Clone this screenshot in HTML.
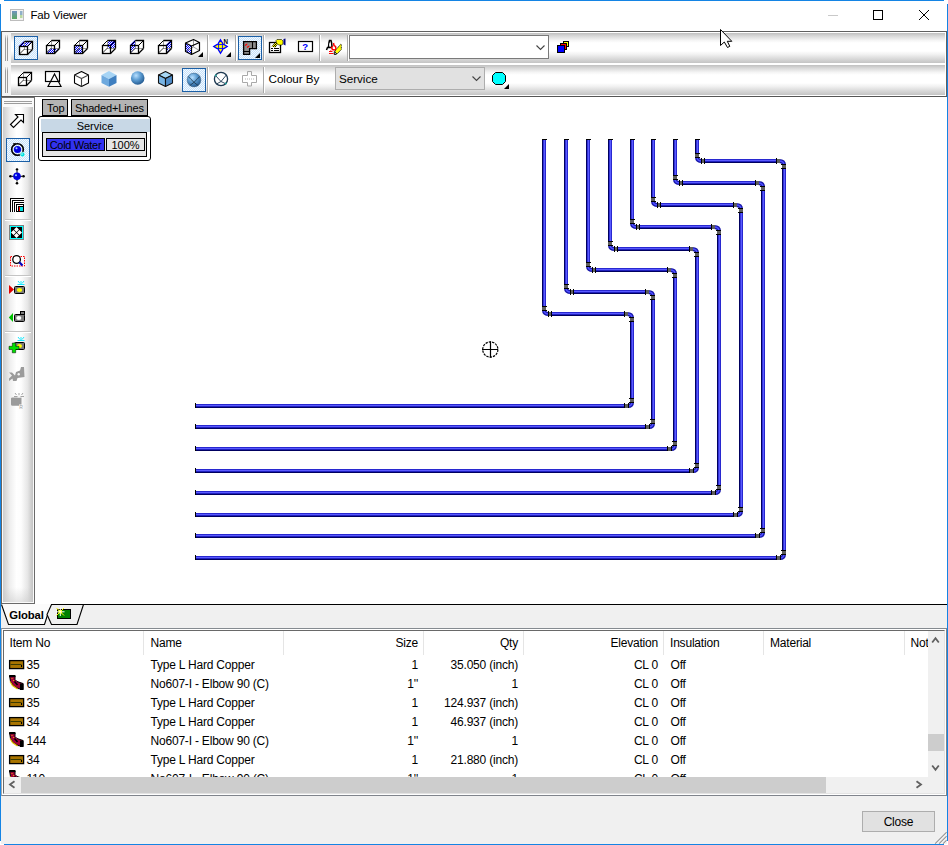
<!DOCTYPE html>
<html><head><meta charset="utf-8">
<style>
*{box-sizing:border-box;margin:0;padding:0}
html,body{width:948px;height:845px;overflow:hidden;background:#fff}
body{position:relative;font-family:"Liberation Sans",sans-serif;font-size:12px;color:#000}
.a{position:absolute}
.sel{position:absolute;border:1px solid #1b5fa6;background-color:#e3f1ff;
 background-image:repeating-conic-gradient(#c4e0fa 0 25%,#f4faff 0 50%);background-size:2px 2px}
.txt{position:absolute;white-space:nowrap;line-height:1}
#ov{position:absolute;left:0;top:0}
</style></head><body>
<div class="a" style="left:4px;top:0;width:940px;height:1px;background:#1484e4"></div><div class="a" style="left:0;top:4px;width:1px;height:837px;background:#1484e4"></div><div class="a" style="left:947px;top:4px;width:1px;height:837px;background:#1484e4"></div><div class="a" style="left:4px;top:844px;width:940px;height:1px;background:#1484e4"></div><div class="txt" style="left:30.5px;top:10.27px;font-size:11.5px;letter-spacing:-0.15px">Fab Viewer</div><div class="a" style="left:1px;top:31px;width:946px;height:1px;background:#606060"></div><div class="a" style="left:1px;top:31px;width:1px;height:66px;background:#606060"></div><div class="a" style="left:946px;top:31px;width:1px;height:66px;background:#606060"></div><div class="a" style="left:2px;top:32px;width:944px;height:64px;background:#f5f5f5"></div><div class="a" style="left:11px;top:32px;width:935px;height:32px;border-top:1px solid #fff;border-bottom:1px solid #fff;border-right:1px solid #fff;background:linear-gradient(#c0c0c0 0%,#d8d8d8 10%,#f4f4f4 24%,#fff 33%,#fff 60%,#f0f0f0 72%,#d6d6d6 88%,#c4c4c4 100%)"></div><div class="a" style="left:5px;top:35px;width:1px;height:26px;background:linear-gradient(#e0e0e0,#9c9c9c 15%,#9c9c9c)"></div><div class="a" style="left:7px;top:35px;width:1px;height:26px;background:linear-gradient(#e0e0e0,#9c9c9c 15%,#9c9c9c)"></div><div class="a" style="left:11px;top:64px;width:935px;height:32px;border-top:1px solid #fff;border-bottom:1px solid #fff;border-right:1px solid #fff;background:linear-gradient(#c0c0c0 0%,#d8d8d8 10%,#f4f4f4 24%,#fff 33%,#fff 60%,#f0f0f0 72%,#d6d6d6 88%,#c4c4c4 100%)"></div><div class="a" style="left:5px;top:67px;width:1px;height:26px;background:linear-gradient(#e0e0e0,#9c9c9c 15%,#9c9c9c)"></div><div class="a" style="left:7px;top:67px;width:1px;height:26px;background:linear-gradient(#e0e0e0,#9c9c9c 15%,#9c9c9c)"></div><div class="a" style="left:1px;top:96px;width:946px;height:1px;background:#555"></div><div class="a" style="left:207px;top:35px;width:1px;height:26px;background:#a8a8a8"></div><div class="a" style="left:208px;top:35px;width:1px;height:26px;background:#fff"></div><div class="a" style="left:235px;top:35px;width:1px;height:26px;background:#a8a8a8"></div><div class="a" style="left:236px;top:35px;width:1px;height:26px;background:#fff"></div><div class="a" style="left:263px;top:35px;width:1px;height:26px;background:#a8a8a8"></div><div class="a" style="left:264px;top:35px;width:1px;height:26px;background:#fff"></div><div class="a" style="left:319px;top:35px;width:1px;height:26px;background:#a8a8a8"></div><div class="a" style="left:320px;top:35px;width:1px;height:26px;background:#fff"></div><div class="a" style="left:347px;top:35px;width:1px;height:26px;background:#a8a8a8"></div><div class="a" style="left:348px;top:35px;width:1px;height:26px;background:#fff"></div><div class="a" style="left:207px;top:67px;width:1px;height:26px;background:#a8a8a8"></div><div class="a" style="left:208px;top:67px;width:1px;height:26px;background:#fff"></div><div class="a" style="left:263px;top:67px;width:1px;height:26px;background:#a8a8a8"></div><div class="a" style="left:264px;top:67px;width:1px;height:26px;background:#fff"></div><div class="sel" style="left:14px;top:36px;width:24px;height:24px"></div><div class="sel" style="left:238px;top:36px;width:24px;height:24px"></div><div class="sel" style="left:182px;top:68px;width:24px;height:24px"></div><div class="a" style="left:349px;top:35px;width:200px;height:24px;background:#fff;border:1px solid #7a7a7a"></div><div class="txt" style="left:268.5px;top:73.10px;font-size:11.7px;letter-spacing:-0.05px">Colour By</div><div class="a" style="left:335px;top:67px;width:150px;height:23px;background:#e1e1e1;border:1px solid #adadad"></div><div class="txt" style="left:339px;top:73.10px;font-size:11.7px;letter-spacing:-0.05px">Service</div><div class="a" style="left:2px;top:97px;width:33px;height:507px;background:#fafafa;border-right:1px solid #6a6a6a;border-bottom:1px solid #6a6a6a"></div><div class="a" style="left:1px;top:97px;width:1px;height:507px;background:#6a6560"></div><div class="a" style="left:1px;top:97px;width:34px;height:1px;background:#707070"></div><div class="a" style="left:3px;top:107px;width:30px;height:495px;background:linear-gradient(#fff0 97%,#c8c8c880 100%),linear-gradient(90deg,#cdcdcd 0%,#f0f0f0 25%,#fff 45%,#fdfdfd 60%,#e6e6e6 82%,#c3c3c3 100%)"></div><div class="a" style="left:4px;top:101px;width:28px;height:1px;background:#9c9c9c"></div><div class="a" style="left:4px;top:103px;width:28px;height:1px;background:#9c9c9c"></div><div class="sel" style="left:6px;top:138px;width:24px;height:24px"></div><div class="a" style="left:5px;top:219px;width:26px;height:1px;background:#c4c4c4"></div><div class="a" style="left:5px;top:220px;width:26px;height:1px;background:#fff"></div><div class="a" style="left:5px;top:275px;width:26px;height:1px;background:#c4c4c4"></div><div class="a" style="left:5px;top:276px;width:26px;height:1px;background:#fff"></div><div class="a" style="left:5px;top:331px;width:26px;height:1px;background:#c4c4c4"></div><div class="a" style="left:5px;top:332px;width:26px;height:1px;background:#fff"></div><div class="a" style="left:42px;top:99px;width:26px;height:17px;background:#b4b4b4;border:1px solid #000"></div><div class="txt" style="left:47px;top:103px;font-size:11px">Top</div><div class="a" style="left:71px;top:99px;width:77px;height:17px;background:#b4b4b4;border:1px solid #000"></div><div class="txt" style="left:75px;top:103px;font-size:11px;letter-spacing:-0.15px">Shaded+Lines</div><div class="a" style="left:38px;top:116px;width:113px;height:45px;background:#fff;border:1px solid #000;border-radius:3px"></div><div class="a" style="left:41px;top:119px;width:109px;height:13px;background:#c8d8e6"></div><div class="txt" style="left:40px;top:121px;width:110px;text-align:center;font-size:11px">Service</div><div class="a" style="left:42px;top:132px;width:105px;height:25px;background:#e6e6e6;border:1px solid #000"></div><div class="a" style="left:46px;top:138px;width:59px;height:13px;background:#3232f0;border:1px solid #000"></div><div class="txt" style="left:46px;top:140px;width:59px;text-align:center;font-size:11px;letter-spacing:-0.3px">Cold Water</div><div class="a" style="left:106px;top:138px;width:39px;height:13px;background:#e6e6e6;border:1px solid #000"></div><div class="txt" style="left:106px;top:140px;width:39px;text-align:center;font-size:11px">100%</div><div class="a" style="left:1px;top:604px;width:946px;height:240px;background:#f0f0f0"></div><div class="a" style="left:1px;top:628px;width:946px;height:168px;background:#fff;border-top:1px solid #858a90;border-left:1px solid #a8a8a8;border-right:1px solid #80848a;border-bottom:1px solid #80848c"></div><div class="a" style="left:3px;top:630px;width:942px;height:164px;background:#fff;border-top:1px solid #696969;border-left:1px solid #696969;border-right:1px solid #e3e3e3;border-bottom:1px solid #e3e3e3"></div><div class="a" style="left:143px;top:631px;width:1px;height:24px;background:#e5e5e5"></div><div class="a" style="left:283px;top:631px;width:1px;height:24px;background:#e5e5e5"></div><div class="a" style="left:423px;top:631px;width:1px;height:24px;background:#e5e5e5"></div><div class="a" style="left:523px;top:631px;width:1px;height:24px;background:#e5e5e5"></div><div class="a" style="left:663px;top:631px;width:1px;height:24px;background:#e5e5e5"></div><div class="a" style="left:763px;top:631px;width:1px;height:24px;background:#e5e5e5"></div><div class="a" style="left:904px;top:631px;width:1px;height:24px;background:#e5e5e5"></div><div class="txt" style="left:9.5px;top:636.84px;font-size:12px;letter-spacing:-0.2px">Item No</div><div class="txt" style="left:150.5px;top:636.84px;font-size:12px;letter-spacing:-0.2px">Name</div><div class="txt" style="left:218px;width:200px;text-align:right;top:636.84px;font-size:12px;letter-spacing:-0.2px">Size</div><div class="txt" style="left:318px;width:200px;text-align:right;top:636.84px;font-size:12px;letter-spacing:-0.2px">Qty</div><div class="txt" style="left:458px;width:200px;text-align:right;top:636.84px;font-size:12px;letter-spacing:-0.2px">Elevation</div><div class="txt" style="left:670px;top:636.84px;font-size:12px;letter-spacing:-0.2px">Insulation</div><div class="txt" style="left:770px;top:636.84px;font-size:12px;letter-spacing:-0.2px">Material</div><div class="txt" style="left:910.5px;top:636.84px;font-size:12px;letter-spacing:-0.2px">Not</div><div class="a" style="left:4px;top:656px;width:924px;height:121px;overflow:hidden"><div class="txt" style="left:22.5px;top:2.84px;font-size:12px;letter-spacing:-0.2px">35</div><div class="txt" style="left:146.5px;top:2.84px;font-size:12px;letter-spacing:-0.2px">Type L Hard Copper</div><div class="txt" style="left:214px;width:200px;text-align:right;top:2.84px;font-size:12px;letter-spacing:-0.2px">1</div><div class="txt" style="left:314px;width:200px;text-align:right;top:2.84px;font-size:12px;letter-spacing:-0.2px">35.050 (inch)</div><div class="txt" style="left:454px;width:200px;text-align:right;top:2.84px;font-size:12px;letter-spacing:-0.2px">CL 0</div><div class="txt" style="left:666.5px;top:2.84px;font-size:12px;letter-spacing:-0.2px">Off</div><div class="txt" style="left:22.5px;top:21.84px;font-size:12px;letter-spacing:-0.2px">60</div><div class="txt" style="left:146.5px;top:21.84px;font-size:12px;letter-spacing:-0.2px">No607-I - Elbow 90 (C)</div><div class="txt" style="left:214px;width:200px;text-align:right;top:21.84px;font-size:12px;letter-spacing:-0.2px">1&#39;&#39;</div><div class="txt" style="left:314px;width:200px;text-align:right;top:21.84px;font-size:12px;letter-spacing:-0.2px">1</div><div class="txt" style="left:454px;width:200px;text-align:right;top:21.84px;font-size:12px;letter-spacing:-0.2px">CL 0</div><div class="txt" style="left:666.5px;top:21.84px;font-size:12px;letter-spacing:-0.2px">Off</div><div class="txt" style="left:22.5px;top:40.84px;font-size:12px;letter-spacing:-0.2px">35</div><div class="txt" style="left:146.5px;top:40.84px;font-size:12px;letter-spacing:-0.2px">Type L Hard Copper</div><div class="txt" style="left:214px;width:200px;text-align:right;top:40.84px;font-size:12px;letter-spacing:-0.2px">1</div><div class="txt" style="left:314px;width:200px;text-align:right;top:40.84px;font-size:12px;letter-spacing:-0.2px">124.937 (inch)</div><div class="txt" style="left:454px;width:200px;text-align:right;top:40.84px;font-size:12px;letter-spacing:-0.2px">CL 0</div><div class="txt" style="left:666.5px;top:40.84px;font-size:12px;letter-spacing:-0.2px">Off</div><div class="txt" style="left:22.5px;top:59.84px;font-size:12px;letter-spacing:-0.2px">34</div><div class="txt" style="left:146.5px;top:59.84px;font-size:12px;letter-spacing:-0.2px">Type L Hard Copper</div><div class="txt" style="left:214px;width:200px;text-align:right;top:59.84px;font-size:12px;letter-spacing:-0.2px">1</div><div class="txt" style="left:314px;width:200px;text-align:right;top:59.84px;font-size:12px;letter-spacing:-0.2px">46.937 (inch)</div><div class="txt" style="left:454px;width:200px;text-align:right;top:59.84px;font-size:12px;letter-spacing:-0.2px">CL 0</div><div class="txt" style="left:666.5px;top:59.84px;font-size:12px;letter-spacing:-0.2px">Off</div><div class="txt" style="left:22.5px;top:78.84px;font-size:12px;letter-spacing:-0.2px">144</div><div class="txt" style="left:146.5px;top:78.84px;font-size:12px;letter-spacing:-0.2px">No607-I - Elbow 90 (C)</div><div class="txt" style="left:214px;width:200px;text-align:right;top:78.84px;font-size:12px;letter-spacing:-0.2px">1&#39;&#39;</div><div class="txt" style="left:314px;width:200px;text-align:right;top:78.84px;font-size:12px;letter-spacing:-0.2px">1</div><div class="txt" style="left:454px;width:200px;text-align:right;top:78.84px;font-size:12px;letter-spacing:-0.2px">CL 0</div><div class="txt" style="left:666.5px;top:78.84px;font-size:12px;letter-spacing:-0.2px">Off</div><div class="txt" style="left:22.5px;top:97.84px;font-size:12px;letter-spacing:-0.2px">34</div><div class="txt" style="left:146.5px;top:97.84px;font-size:12px;letter-spacing:-0.2px">Type L Hard Copper</div><div class="txt" style="left:214px;width:200px;text-align:right;top:97.84px;font-size:12px;letter-spacing:-0.2px">1</div><div class="txt" style="left:314px;width:200px;text-align:right;top:97.84px;font-size:12px;letter-spacing:-0.2px">21.880 (inch)</div><div class="txt" style="left:454px;width:200px;text-align:right;top:97.84px;font-size:12px;letter-spacing:-0.2px">CL 0</div><div class="txt" style="left:666.5px;top:97.84px;font-size:12px;letter-spacing:-0.2px">Off</div><div class="txt" style="left:22.5px;top:116.84px;font-size:12px;letter-spacing:-0.2px">110</div><div class="txt" style="left:146.5px;top:116.84px;font-size:12px;letter-spacing:-0.2px">No607-I - Elbow 90 (C)</div><div class="txt" style="left:214px;width:200px;text-align:right;top:116.84px;font-size:12px;letter-spacing:-0.2px">1&#39;&#39;</div><div class="txt" style="left:314px;width:200px;text-align:right;top:116.84px;font-size:12px;letter-spacing:-0.2px">1</div><div class="txt" style="left:454px;width:200px;text-align:right;top:116.84px;font-size:12px;letter-spacing:-0.2px">CL 0</div><div class="txt" style="left:666.5px;top:116.84px;font-size:12px;letter-spacing:-0.2px">Off</div></div><div class="a" style="left:928px;top:631px;width:16px;height:146px;background:#f0f0f0"></div><div class="a" style="left:928px;top:734px;width:16px;height:17px;background:#cdcdcd"></div><div class="a" style="left:4px;top:777px;width:940px;height:16px;background:#f0f0f0"></div><div class="a" style="left:21px;top:777px;width:805px;height:16px;background:#cdcdcd"></div><div class="a" style="left:862px;top:811px;width:73px;height:21px;background:#e1e1e1;border:1px solid #adadad"></div><div class="txt" style="left:862px;top:815.84px;font-size:12px;width:73px;text-align:center;letter-spacing:-0.2px">Close</div>
<svg id="ov" width="948" height="845" viewBox="0 0 948 845"><defs>
<pattern id="dith" width="2" height="2" patternUnits="userSpaceOnUse">
<rect width="2" height="2" fill="#fff"/><rect width="1" height="1" fill="#0000ff"/><rect x="1" y="1" width="1" height="1" fill="#0000ff"/>
</pattern>
<pattern id="ydith" width="2" height="2" patternUnits="userSpaceOnUse">
<rect width="2" height="2" fill="#000"/><rect width="1" height="1" fill="#ffff00"/><rect x="1" y="1" width="1" height="1" fill="#ffff00"/>
</pattern>
<radialGradient id="sph" cx="0.38" cy="0.32" r="0.7">
<stop offset="0" stop-color="#b8e0ff"/><stop offset="0.5" stop-color="#5a9ad0"/><stop offset="1" stop-color="#245a90"/>
</radialGradient>
<clipPath id="rowclip"><rect x="4" y="656" width="924" height="121"/></clipPath>
<linearGradient id="tgrad" x1="0" y1="0" x2="0" y2="1"><stop offset="0" stop-color="#6f93c0"/><stop offset="1" stop-color="#5aa860"/></linearGradient>
</defs><g>
<rect x="10.5" y="9.5" width="13" height="11" fill="#f2f2f2" stroke="#bdbdbd"/>
<rect x="12" y="11" width="5" height="8" fill="url(#tgrad)"/>
<rect x="20" y="11" width="2.5" height="4" fill="#8fb0c8"/>
<rect x="20" y="15" width="2.5" height="3" fill="#b8d8a0"/>
</g><line x1="828" y1="15.5" x2="838" y2="15.5" stroke="#c9c9c9" stroke-width="1"/><rect x="873.5" y="10.5" width="9" height="9" fill="none" stroke="#000" stroke-width="1"/><path d="M919 10 L929 20 M929 10 L919 20" stroke="#000" stroke-width="1"/><g><polygon points="19,46 24,41 32,41 32,49 27,54 19,54" fill="#fff"/><polygon points="19,46 24,41 32,41 27,46" fill="url(#dith)"/><path d="M24.5 41 V49.5 H32" stroke="#9a9a9a" stroke-width="1" fill="none"/><line x1="19.5" y1="54" x2="24.5" y2="49" stroke="#333" stroke-width="1"/><path d="M24.5 41.5 H32.5 V49.5" stroke="#000" stroke-width="1.3" fill="none"/><line x1="19.5" y1="46.5" x2="24.5" y2="41.5" stroke="#000" stroke-width="1"/><line x1="27.5" y1="46.5" x2="32.5" y2="41.5" stroke="#000" stroke-width="1"/><line x1="27.5" y1="54.5" x2="32.5" y2="49.5" stroke="#000" stroke-width="1.2"/><rect x="19.5" y="46.5" width="8" height="8" fill="none" stroke="#000" stroke-width="1.3"/></g><g><polygon points="46,45 51,40 59,40 59,48 54,53 46,53" fill="#fff"/><polygon points="46,53 51,48 59,48 54,53" fill="url(#dith)"/><path d="M51.5 40 V48.5 H59" stroke="#9a9a9a" stroke-width="1" fill="none"/><line x1="46.5" y1="53" x2="51.5" y2="48" stroke="#333" stroke-width="1"/><path d="M51.5 40.5 H59.5 V48.5" stroke="#000" stroke-width="1.3" fill="none"/><line x1="46.5" y1="45.5" x2="51.5" y2="40.5" stroke="#000" stroke-width="1"/><line x1="54.5" y1="45.5" x2="59.5" y2="40.5" stroke="#000" stroke-width="1"/><line x1="54.5" y1="53.5" x2="59.5" y2="48.5" stroke="#000" stroke-width="1.2"/><rect x="46.5" y="45.5" width="8" height="8" fill="none" stroke="#000" stroke-width="1.3"/></g><g><polygon points="74,45 79,40 87,40 87,48 82,53 74,53" fill="#fff"/><polygon points="74,45 82,45 82,53 74,53" fill="url(#dith)"/><path d="M79.5 40 V48.5 H87" stroke="#9a9a9a" stroke-width="1" fill="none"/><line x1="74.5" y1="53" x2="79.5" y2="48" stroke="#333" stroke-width="1"/><path d="M79.5 40.5 H87.5 V48.5" stroke="#000" stroke-width="1.3" fill="none"/><line x1="74.5" y1="45.5" x2="79.5" y2="40.5" stroke="#000" stroke-width="1"/><line x1="82.5" y1="45.5" x2="87.5" y2="40.5" stroke="#000" stroke-width="1"/><line x1="82.5" y1="53.5" x2="87.5" y2="48.5" stroke="#000" stroke-width="1.2"/><rect x="74.5" y="45.5" width="8" height="8" fill="none" stroke="#000" stroke-width="1.3"/></g><g><polygon points="102,45 107,40 115,40 115,48 110,53 102,53" fill="#fff"/><polygon points="107,40 115,40 115,48 107,48" fill="url(#dith)"/><path d="M107.5 40 V48.5 H115" stroke="#9a9a9a" stroke-width="1" fill="none"/><line x1="102.5" y1="53" x2="107.5" y2="48" stroke="#333" stroke-width="1"/><path d="M107.5 40.5 H115.5 V48.5" stroke="#000" stroke-width="1.3" fill="none"/><line x1="102.5" y1="45.5" x2="107.5" y2="40.5" stroke="#000" stroke-width="1"/><line x1="110.5" y1="45.5" x2="115.5" y2="40.5" stroke="#000" stroke-width="1"/><line x1="110.5" y1="53.5" x2="115.5" y2="48.5" stroke="#000" stroke-width="1.2"/><rect x="102.5" y="45.5" width="8" height="8" fill="none" stroke="#000" stroke-width="1.3"/></g><g><polygon points="130,45 135,40 143,40 143,48 138,53 130,53" fill="#fff"/><polygon points="130,45 135,40 135,48 130,53" fill="url(#dith)"/><path d="M135.5 40 V48.5 H143" stroke="#9a9a9a" stroke-width="1" fill="none"/><line x1="130.5" y1="53" x2="135.5" y2="48" stroke="#333" stroke-width="1"/><path d="M135.5 40.5 H143.5 V48.5" stroke="#000" stroke-width="1.3" fill="none"/><line x1="130.5" y1="45.5" x2="135.5" y2="40.5" stroke="#000" stroke-width="1"/><line x1="138.5" y1="45.5" x2="143.5" y2="40.5" stroke="#000" stroke-width="1"/><line x1="138.5" y1="53.5" x2="143.5" y2="48.5" stroke="#000" stroke-width="1.2"/><rect x="130.5" y="45.5" width="8" height="8" fill="none" stroke="#000" stroke-width="1.3"/></g><g><polygon points="158,45 163,40 171,40 171,48 166,53 158,53" fill="#fff"/><polygon points="166,45 171,40 171,48 166,53" fill="url(#dith)"/><path d="M163.5 40 V48.5 H171" stroke="#9a9a9a" stroke-width="1" fill="none"/><line x1="158.5" y1="53" x2="163.5" y2="48" stroke="#333" stroke-width="1"/><path d="M163.5 40.5 H171.5 V48.5" stroke="#000" stroke-width="1.3" fill="none"/><line x1="158.5" y1="45.5" x2="163.5" y2="40.5" stroke="#000" stroke-width="1"/><line x1="166.5" y1="45.5" x2="171.5" y2="40.5" stroke="#000" stroke-width="1"/><line x1="166.5" y1="53.5" x2="171.5" y2="48.5" stroke="#000" stroke-width="1.2"/><rect x="158.5" y="45.5" width="8" height="8" fill="none" stroke="#000" stroke-width="1.3"/></g><g>
<polygon points="185.5,43 191.5,46 191.5,54.5 185.5,51.5" fill="url(#dith)"/>
<path d="M193.5 39.5 V47 M193.5 47 L199.5 50.5 M193.5 47 L185.5 51.5" stroke="#999" stroke-width="1" fill="none"/>
<path d="M185.5 43 L193.5 39.5 L199.5 42.5 L191.5 46 Z M191.5 46 V54.5 M185.5 43 V51.5 L191.5 54.5 L199.5 50.5 V42.5" stroke="#000" stroke-width="1.2" fill="none" stroke-linejoin="round"/>
</g><polygon points="203,57 198,57 203,52" fill="#000"/><g>
<path d="M220.5 39.8 L222.6 43.2 V44.4 H223.8 L227.2 46.5 L223.8 48.6 H222.6 V49.8 L220.5 53.2 L218.4 49.8 V48.6 H217.2 L213.8 46.5 L217.2 44.4 H218.4 V43.2 Z" fill="#ffff00" stroke="#0000ff" stroke-width="1.3" stroke-linejoin="miter"/>
<rect x="218.6" y="44.6" width="3.8" height="3.8" fill="#ffff00" stroke="#0000ff" stroke-width="0.9"/>
<text x="223.6" y="44.3" font-family="Liberation Sans" font-weight="bold" font-size="6.3" fill="#000">N</text>
</g><polygon points="231,57 226,57 231,52" fill="#000"/><g>
<rect x="243" y="41" width="14" height="8" fill="#8c8c8c"/>
<rect x="243" y="41" width="7" height="14" fill="#8c8c8c"/>
<path d="M243.6 55 V41.6 H256.4 V48.6 H249.6 V54.4 H243.6" stroke="#000" stroke-width="1.3" fill="none"/>
<path d="M252.5 42 V48 M244 51.5 H249.5" stroke="#000" stroke-width="1.1"/>
<path d="M245.3 45.8 Q246 44.2 247.3 44.2 M247.3 47.8 Q248 46.2 249.3 46.2" stroke="#ff0000" stroke-width="1.3" fill="none"/>
</g><polygon points="260,58 255,58 260,53" fill="#000"/><g>
<rect x="269.5" y="42.5" width="11" height="10" fill="#fff" stroke="#000" stroke-width="1.3"/>
<path d="M271 48.5 H273 M274 48.5 H279 M271 50.5 H273 M274 50.5 H279" stroke="#000" stroke-width="1"/>
<path d="M271.5 46.5 L276 41.5 L278 43.5 L275.5 47.5 Z" fill="url(#ydith)"/>
<path d="M276 40.5 L277 39.5 H281.5 L283 41 V44 L281.5 45 H278.5 L276.5 43 Z" fill="#ffff00" stroke="#000" stroke-width="0.6"/>
<path d="M283.5 39 L285.5 38.5 V45.5 L283.5 44.5 Z" fill="#000080"/>
</g><g>
<rect x="298.5" y="41.5" width="14" height="10" fill="#fff" stroke="#000" stroke-width="1.2"/>
<text x="302.2" y="50.2" font-family="Liberation Sans" font-weight="bold" font-size="9.6" fill="#0000ff">?</text>
</g><g>
<path d="M326.5 50 L327.5 47.5 L328.5 47.5 L329 42.5 L329.5 40.5 L331 40.5 L331.5 42.5 L332 46.5 L331 47.5 L328.8 47.5" stroke="#000" stroke-width="1.5" fill="none" stroke-linejoin="miter"/>
<rect x="329.3" y="43.3" width="1.4" height="2.6" fill="#fff"/>
<path d="M333.5 43 L334 45.5 L335.5 46.5 L336 49 L334.5 50 L332.5 49.5 L331.5 47.5 L333 46.5" stroke="#ff0000" stroke-width="1.5" fill="none"/>
<path d="M329 51.5 H332.5 M329 53.5 H333.5 M330.8 50.3 V51.5" stroke="#ff0000" stroke-width="1"/>
<path d="M335.5 50.5 L340.5 44.3 L341.3 44.5 L341.3 49.5 L337.5 53.5 L335 54.5 L334.5 53.5 Z" fill="#ffff00" stroke="#000" stroke-width="0.9" stroke-dasharray="1 0.6"/>
<path d="M334.3 51.5 L336.8 53.8 L334.3 54.6 Z" fill="#fff" stroke="#000" stroke-width="0.9"/>
</g><path d="M536.5 45.5 L540.5 49.5 L544.5 45.5" stroke="#444" stroke-width="1.1" fill="none"/><g stroke="#000" stroke-width="1">
<rect x="563.5" y="41.5" width="5" height="5" fill="#ffff00"/>
<rect x="560.5" y="43.5" width="6" height="6" fill="#ff0000"/>
<rect x="557.5" y="45.5" width="7" height="7" fill="#0000ff"/>
</g><g><polygon points="18,77 23,72 31,72 31,80 26,85 18,85" fill="#fff"/><path d="M23.5 72 V80.5 H31" stroke="#9a9a9a" stroke-width="1" fill="none"/><line x1="18.5" y1="85" x2="23.5" y2="80" stroke="#333" stroke-width="1"/><path d="M23.5 72.5 H31.5 V80.5" stroke="#000" stroke-width="1.3" fill="none"/><line x1="18.5" y1="77.5" x2="23.5" y2="72.5" stroke="#000" stroke-width="1"/><line x1="26.5" y1="77.5" x2="31.5" y2="72.5" stroke="#000" stroke-width="1"/><line x1="26.5" y1="85.5" x2="31.5" y2="80.5" stroke="#000" stroke-width="1.2"/><rect x="18.5" y="77.5" width="8" height="8" fill="none" stroke="#000" stroke-width="1.3"/></g><g fill="none" stroke="#000" stroke-width="1.2">
<rect x="45.5" y="71.5" width="14" height="10"/>
<path d="M48 86.5 L54.5 74 L61 86.5 Z" fill="none"/>
</g><g fill="#fff" stroke="#000" stroke-width="1.1" stroke-linejoin="round">
<path d="M74.5 75 L81.5 71.5 L88.5 75 V83 L81.5 86.5 L74.5 83 Z"/>
<path d="M74.5 75 L81.5 78.5 L88.5 75 M81.5 78.5 V86.5" fill="none" stroke="#444"/>
</g><g>
<polygon points="101.5,75 109,71 116.5,75 109,79" fill="#a6d4f5"/>
<polygon points="101.5,75 109,79 109,86.8 101.5,83" fill="#6ea9de"/>
<polygon points="109,79 116.5,75 116.5,83 109,86.8" fill="#3f7fc0"/>
</g><circle cx="137.7" cy="78" r="6.8" fill="url(#sph)"/><g stroke="#111" stroke-width="1.1" stroke-linejoin="round">
<polygon points="158.5,75 165.5,71.5 172.5,75 165.5,78.5" fill="#a8d8f5"/>
<polygon points="158.5,75 165.5,78.5 165.5,86.5 158.5,83" fill="#78b4e4"/>
<polygon points="165.5,78.5 172.5,75 172.5,83 165.5,86.5" fill="#4f8cc8"/>
</g><g>
<circle cx="194" cy="80" r="6.9" fill="url(#sph)" stroke="#3a5f80" stroke-width="0.5"/>
<path d="M188.3 76.5 Q191 79.5 194 82.3 Q197 79.5 199.7 76.5 M194 82.3 L189.8 85.6 M194 82.3 L198.2 85.6" stroke="#1f3a52" stroke-width="0.9" fill="none"/>
</g><g fill="none">
<circle cx="221" cy="79" r="6.6" stroke="#1c3850" stroke-width="1.3"/>
<path d="M215.5 75.5 L221 81.5 L226.5 74.8 M221 81.5 L216.5 84 M221 81.5 L225.8 83.8" stroke="#1c3850" stroke-width="0.9"/>
<circle cx="215.8" cy="75.5" r="0.9" fill="#1aa39a"/>
<circle cx="225.8" cy="83.5" r="0.9" fill="#1aa39a"/>
</g><path d="M247.5 71.5 H251.5 V75.5 H256.5 V82.5 H251.5 V86 H247.5 V82.5 H242.5 V75.5 H247.5 Z" fill="none" stroke="#a8a8a8" stroke-width="1"/><path d="M245 79 H254" stroke="#b0b0b0" stroke-width="1" stroke-dasharray="1 1"/><path d="M472.5 76.5 L476.5 80.5 L480.5 76.5" stroke="#444" stroke-width="1.1" fill="none"/><polygon points="495.5,72.5 502.5,72.5 505.5,75.5 505.5,81.5 502.5,84.5 495.5,84.5 492.5,81.5 492.5,75.5" fill="#00ffff" stroke="#000" stroke-width="1"/><polygon points="509,89 504,89 509,84" fill="#000"/><g>
<path d="M10.5 124.5 L18 117 L15.5 114.5 L23.5 114.5 L23.5 122.5 L21 120 L13.5 127.5 Z" fill="#fff" stroke="#000" stroke-width="1.1" stroke-linejoin="miter"/>
</g><g>
<circle cx="17.5" cy="149.5" r="5.8" fill="none" stroke="#000" stroke-width="1.6"/>
<path d="M13 143 L16.5 143.5 L14.5 146" fill="#000"/>
<circle cx="17.5" cy="149.5" r="3.6" fill="#0000e0"/>
<circle cx="16.5" cy="148.3" r="1" fill="#9fd0ff"/>
<circle cx="22.5" cy="154.5" r="2.4" fill="#00e0e0" stroke="#fff" stroke-width="0.6"/>
<circle cx="22" cy="154" r="0.8" fill="#c0ffff"/>
</g><g>
<path d="M17 171 V181.5 M12 176.3 H22" stroke="#000" stroke-width="1"/>
<circle cx="17" cy="169.5" r="1.3" fill="#000"/><circle cx="17" cy="183.2" r="1.3" fill="#000"/>
<circle cx="10.5" cy="176.3" r="1.3" fill="#000"/><circle cx="23.5" cy="176.3" r="1.3" fill="#000"/>
<circle cx="17" cy="176.3" r="3.8" fill="#0000e0"/>
<circle cx="16" cy="175.2" r="1" fill="#9fd0ff"/>
</g><g shape-rendering="crispEdges">
<rect x="10" y="198" width="14" height="14" fill="#000"/>
<path d="M11.5 211.5 V199.5 H23.5" fill="none" stroke="#fff" stroke-width="1"/>
<path d="M13.5 211.5 V201.5 H23.5" fill="none" stroke="#fff" stroke-width="1"/>
<path d="M15.5 211.5 V203.5 H23.5" fill="none" stroke="#fff" stroke-width="1"/>
<path d="M17.5 211 V205.5 H23" fill="none" stroke="#fff" stroke-width="1"/>
<rect x="19" y="207" width="1" height="4" fill="#ff0000"/>
<rect x="20" y="207" width="3" height="4" fill="#00e0e0"/>
</g><g>
<rect x="9.5" y="225.5" width="14" height="14" fill="#000" stroke="#808080" stroke-width="1"/>
<rect x="10.5" y="226.5" width="12" height="12" fill="none" stroke="#00ffff" stroke-width="1"/>
<path d="M16.5 227 L19 229.5 L16.5 232 L14 229.5 Z M16.5 233 L19 235.5 L16.5 238 L14 235.5 Z M11 232.5 L13.5 230 L16 232.5 L13.5 235 Z M17 232.5 L19.5 230 L22 232.5 L19.5 235 Z" fill="#fff"/>
</g><g>
<rect x="10.5" y="256.5" width="14" height="9.5" fill="none" stroke="#ff0000" stroke-width="1" stroke-dasharray="1.5 1"/>
<circle cx="16.6" cy="259.5" r="3.8" fill="#fff" stroke="#000" stroke-width="1.3"/>
<path d="M19.3 262.3 L22.5 265.5" stroke="#0000c0" stroke-width="2.2"/>
</g><g>
<polygon points="9,285 14,289.5 9,294" fill="#e00000"/>
<rect x="14.5" y="286.5" width="10" height="7" rx="1" fill="#7a7a7a" stroke="#000" stroke-width="1"/>
<ellipse cx="19.5" cy="290" rx="2.7" ry="2" fill="#ffff00"/>
<path d="M18 281 L20 283.5 M24 281 L22 283.5 M17.5 284.5 H24.5 M21 281 V285" stroke="#00e8ff" stroke-width="0.9"/>
</g><g>
<polygon points="13,313 8.8,317.5 13,322" fill="#00c000"/>
<rect x="14.5" y="314.5" width="10" height="7" rx="1" fill="#7a7a7a" stroke="#000" stroke-width="1"/>
<rect x="20.5" y="311.5" width="4" height="3" fill="#7a7a7a" stroke="#000" stroke-width="1"/>
<ellipse cx="18.8" cy="318" rx="2.6" ry="1.9" fill="#fff"/>
</g><g>
<rect x="14.5" y="342.5" width="10" height="7" rx="1" fill="#7a7a7a" stroke="#000" stroke-width="1"/>
<ellipse cx="19.5" cy="346" rx="2.5" ry="2" fill="#ffff00"/>
<path d="M18 337 L20 339.5 M24 337 L22 339.5 M17.5 340.5 H24.5 M21 337 V341" stroke="#00e8ff" stroke-width="0.9"/>
<path d="M12.3 343 H15.7 V346.3 H19 V349.5 H15.7 V352.8 H12.3 V349.5 H9 V346.3 H12.3 Z" fill="#00e000" stroke="#000" stroke-width="0.5"/>
</g><g fill="#9b9b9b">
<path d="M9 372.5 L12 372.5 L15 375.5 L16 372 L20 370.5 L21 367 L24 367 L24.5 377 L17.5 378 L16.5 381 L13 381 L12.5 378.5 L9 381 L9 378.5 L12 375.5 Z"/>
<circle cx="18.7" cy="374.2" r="1.2" fill="#f4f4f4"/>
<path d="M11 398.5 Q11 397.5 12.5 397.5 H21.5 V404.5 H19 V405.8 H12.5 Q11 405.8 11 404.5 Z"/>
<path d="M15 393 L16.5 395 M23 393 L21.5 395 M14 396.5 H24 M19 393 V395" stroke="#9b9b9b" stroke-width="0.9"/>
<rect x="17.5" y="395" width="3" height="2.5" fill="#f4f4f4"/>
<text x="19.3" y="408.5" font-family="Liberation Sans" font-size="5" fill="#9b9b9b">R</text>
</g><g shape-rendering="crispEdges"><rect x="542" y="139" width="5" height="1" fill="#000"/><rect x="542" y="140" width="1" height="166" fill="#000060"/><rect x="543" y="140" width="1" height="166" fill="#3333d8"/><rect x="544" y="140" width="1" height="166" fill="#5b5bff"/><rect x="545" y="140" width="1" height="166" fill="#2828d0"/><rect x="542" y="306" width="4" height="5" fill="#5e5e5e"/><rect x="542" y="306" width="5" height="1" fill="#000"/><rect x="542" y="310" width="5" height="1" fill="#000"/><rect x="548" y="312" width="4" height="4" fill="#5e5e5e"/><rect x="548" y="311" width="1" height="6" fill="#000"/><rect x="551" y="311" width="1" height="6" fill="#000"/><rect x="552" y="312" width="72" height="1" fill="#2828d0"/><rect x="552" y="313" width="72" height="1" fill="#5b5bff"/><rect x="552" y="314" width="72" height="1" fill="#2020c0"/><rect x="552" y="315" width="72" height="1" fill="#000060"/><rect x="624" y="312" width="4" height="4" fill="#5e5e5e"/><rect x="624" y="311" width="1" height="6" fill="#000"/><rect x="630" y="317" width="4" height="5" fill="#5e5e5e"/><rect x="629" y="317" width="5" height="1" fill="#000"/><rect x="629" y="321" width="5" height="1" fill="#000"/><rect x="630" y="322" width="1" height="76" fill="#000060"/><rect x="631" y="322" width="1" height="76" fill="#3333d8"/><rect x="632" y="322" width="1" height="76" fill="#5b5bff"/><rect x="633" y="322" width="1" height="76" fill="#2828d0"/><rect x="630" y="398" width="4" height="5" fill="#5e5e5e"/><rect x="629" y="398" width="5" height="1" fill="#000"/><rect x="629" y="402" width="5" height="1" fill="#000"/><rect x="624" y="404" width="5" height="4" fill="#5e5e5e"/><rect x="624" y="403" width="1" height="5" fill="#000"/><rect x="628" y="403" width="1" height="5" fill="#000"/><rect x="196" y="404" width="428" height="1" fill="#2828d0"/><rect x="196" y="405" width="428" height="1" fill="#5b5bff"/><rect x="196" y="406" width="428" height="1" fill="#2020c0"/><rect x="196" y="407" width="428" height="1" fill="#000060"/><rect x="195" y="403" width="1" height="5" fill="#000"/><rect x="564" y="139" width="5" height="1" fill="#000"/><rect x="564" y="140" width="1" height="144" fill="#000060"/><rect x="565" y="140" width="1" height="144" fill="#3333d8"/><rect x="566" y="140" width="1" height="144" fill="#5b5bff"/><rect x="567" y="140" width="1" height="144" fill="#2828d0"/><rect x="564" y="284" width="4" height="5" fill="#5e5e5e"/><rect x="564" y="284" width="5" height="1" fill="#000"/><rect x="564" y="288" width="5" height="1" fill="#000"/><rect x="570" y="290" width="4" height="4" fill="#5e5e5e"/><rect x="570" y="289" width="1" height="6" fill="#000"/><rect x="573" y="289" width="1" height="6" fill="#000"/><rect x="574" y="290" width="71" height="1" fill="#2828d0"/><rect x="574" y="291" width="71" height="1" fill="#5b5bff"/><rect x="574" y="292" width="71" height="1" fill="#2020c0"/><rect x="574" y="293" width="71" height="1" fill="#000060"/><rect x="645" y="290" width="4" height="4" fill="#5e5e5e"/><rect x="645" y="289" width="1" height="6" fill="#000"/><rect x="651" y="295" width="4" height="5" fill="#5e5e5e"/><rect x="650" y="295" width="5" height="1" fill="#000"/><rect x="650" y="299" width="5" height="1" fill="#000"/><rect x="651" y="300" width="1" height="119" fill="#000060"/><rect x="652" y="300" width="1" height="119" fill="#3333d8"/><rect x="653" y="300" width="1" height="119" fill="#5b5bff"/><rect x="654" y="300" width="1" height="119" fill="#2828d0"/><rect x="651" y="419" width="4" height="5" fill="#5e5e5e"/><rect x="650" y="419" width="5" height="1" fill="#000"/><rect x="650" y="423" width="5" height="1" fill="#000"/><rect x="645" y="425" width="5" height="4" fill="#5e5e5e"/><rect x="645" y="424" width="1" height="5" fill="#000"/><rect x="649" y="424" width="1" height="5" fill="#000"/><rect x="196" y="425" width="449" height="1" fill="#2828d0"/><rect x="196" y="426" width="449" height="1" fill="#5b5bff"/><rect x="196" y="427" width="449" height="1" fill="#2020c0"/><rect x="196" y="428" width="449" height="1" fill="#000060"/><rect x="195" y="424" width="1" height="5" fill="#000"/><rect x="586" y="139" width="5" height="1" fill="#000"/><rect x="586" y="140" width="1" height="122" fill="#000060"/><rect x="587" y="140" width="1" height="122" fill="#3333d8"/><rect x="588" y="140" width="1" height="122" fill="#5b5bff"/><rect x="589" y="140" width="1" height="122" fill="#2828d0"/><rect x="586" y="262" width="4" height="5" fill="#5e5e5e"/><rect x="586" y="262" width="5" height="1" fill="#000"/><rect x="586" y="266" width="5" height="1" fill="#000"/><rect x="592" y="268" width="4" height="4" fill="#5e5e5e"/><rect x="592" y="267" width="1" height="6" fill="#000"/><rect x="595" y="267" width="1" height="6" fill="#000"/><rect x="596" y="268" width="71" height="1" fill="#2828d0"/><rect x="596" y="269" width="71" height="1" fill="#5b5bff"/><rect x="596" y="270" width="71" height="1" fill="#2020c0"/><rect x="596" y="271" width="71" height="1" fill="#000060"/><rect x="667" y="268" width="4" height="4" fill="#5e5e5e"/><rect x="667" y="267" width="1" height="6" fill="#000"/><rect x="673" y="273" width="4" height="5" fill="#5e5e5e"/><rect x="672" y="273" width="5" height="1" fill="#000"/><rect x="672" y="277" width="5" height="1" fill="#000"/><rect x="673" y="278" width="1" height="163" fill="#000060"/><rect x="674" y="278" width="1" height="163" fill="#3333d8"/><rect x="675" y="278" width="1" height="163" fill="#5b5bff"/><rect x="676" y="278" width="1" height="163" fill="#2828d0"/><rect x="673" y="441" width="4" height="5" fill="#5e5e5e"/><rect x="672" y="441" width="5" height="1" fill="#000"/><rect x="672" y="445" width="5" height="1" fill="#000"/><rect x="667" y="447" width="5" height="4" fill="#5e5e5e"/><rect x="667" y="446" width="1" height="5" fill="#000"/><rect x="671" y="446" width="1" height="5" fill="#000"/><rect x="196" y="447" width="471" height="1" fill="#2828d0"/><rect x="196" y="448" width="471" height="1" fill="#5b5bff"/><rect x="196" y="449" width="471" height="1" fill="#2020c0"/><rect x="196" y="450" width="471" height="1" fill="#000060"/><rect x="195" y="446" width="1" height="5" fill="#000"/><rect x="608" y="139" width="5" height="1" fill="#000"/><rect x="608" y="140" width="1" height="101" fill="#000060"/><rect x="609" y="140" width="1" height="101" fill="#3333d8"/><rect x="610" y="140" width="1" height="101" fill="#5b5bff"/><rect x="611" y="140" width="1" height="101" fill="#2828d0"/><rect x="608" y="241" width="4" height="5" fill="#5e5e5e"/><rect x="608" y="241" width="5" height="1" fill="#000"/><rect x="608" y="245" width="5" height="1" fill="#000"/><rect x="614" y="247" width="4" height="4" fill="#5e5e5e"/><rect x="614" y="246" width="1" height="6" fill="#000"/><rect x="617" y="246" width="1" height="6" fill="#000"/><rect x="618" y="247" width="71" height="1" fill="#2828d0"/><rect x="618" y="248" width="71" height="1" fill="#5b5bff"/><rect x="618" y="249" width="71" height="1" fill="#2020c0"/><rect x="618" y="250" width="71" height="1" fill="#000060"/><rect x="689" y="247" width="4" height="4" fill="#5e5e5e"/><rect x="689" y="246" width="1" height="6" fill="#000"/><rect x="695" y="252" width="4" height="5" fill="#5e5e5e"/><rect x="694" y="252" width="5" height="1" fill="#000"/><rect x="694" y="256" width="5" height="1" fill="#000"/><rect x="695" y="257" width="1" height="206" fill="#000060"/><rect x="696" y="257" width="1" height="206" fill="#3333d8"/><rect x="697" y="257" width="1" height="206" fill="#5b5bff"/><rect x="698" y="257" width="1" height="206" fill="#2828d0"/><rect x="695" y="463" width="4" height="5" fill="#5e5e5e"/><rect x="694" y="463" width="5" height="1" fill="#000"/><rect x="694" y="467" width="5" height="1" fill="#000"/><rect x="689" y="469" width="5" height="4" fill="#5e5e5e"/><rect x="689" y="468" width="1" height="5" fill="#000"/><rect x="693" y="468" width="1" height="5" fill="#000"/><rect x="196" y="469" width="493" height="1" fill="#2828d0"/><rect x="196" y="470" width="493" height="1" fill="#5b5bff"/><rect x="196" y="471" width="493" height="1" fill="#2020c0"/><rect x="196" y="472" width="493" height="1" fill="#000060"/><rect x="195" y="468" width="1" height="5" fill="#000"/><rect x="630" y="139" width="5" height="1" fill="#000"/><rect x="630" y="140" width="1" height="79" fill="#000060"/><rect x="631" y="140" width="1" height="79" fill="#3333d8"/><rect x="632" y="140" width="1" height="79" fill="#5b5bff"/><rect x="633" y="140" width="1" height="79" fill="#2828d0"/><rect x="630" y="219" width="4" height="5" fill="#5e5e5e"/><rect x="630" y="219" width="5" height="1" fill="#000"/><rect x="630" y="223" width="5" height="1" fill="#000"/><rect x="636" y="225" width="4" height="4" fill="#5e5e5e"/><rect x="636" y="224" width="1" height="6" fill="#000"/><rect x="639" y="224" width="1" height="6" fill="#000"/><rect x="640" y="225" width="71" height="1" fill="#2828d0"/><rect x="640" y="226" width="71" height="1" fill="#5b5bff"/><rect x="640" y="227" width="71" height="1" fill="#2020c0"/><rect x="640" y="228" width="71" height="1" fill="#000060"/><rect x="711" y="225" width="4" height="4" fill="#5e5e5e"/><rect x="711" y="224" width="1" height="6" fill="#000"/><rect x="717" y="230" width="4" height="5" fill="#5e5e5e"/><rect x="716" y="230" width="5" height="1" fill="#000"/><rect x="716" y="234" width="5" height="1" fill="#000"/><rect x="717" y="235" width="1" height="250" fill="#000060"/><rect x="718" y="235" width="1" height="250" fill="#3333d8"/><rect x="719" y="235" width="1" height="250" fill="#5b5bff"/><rect x="720" y="235" width="1" height="250" fill="#2828d0"/><rect x="717" y="485" width="4" height="5" fill="#5e5e5e"/><rect x="716" y="485" width="5" height="1" fill="#000"/><rect x="716" y="489" width="5" height="1" fill="#000"/><rect x="711" y="491" width="5" height="4" fill="#5e5e5e"/><rect x="711" y="490" width="1" height="5" fill="#000"/><rect x="715" y="490" width="1" height="5" fill="#000"/><rect x="196" y="491" width="515" height="1" fill="#2828d0"/><rect x="196" y="492" width="515" height="1" fill="#5b5bff"/><rect x="196" y="493" width="515" height="1" fill="#2020c0"/><rect x="196" y="494" width="515" height="1" fill="#000060"/><rect x="195" y="490" width="1" height="5" fill="#000"/><rect x="651" y="139" width="5" height="1" fill="#000"/><rect x="651" y="140" width="1" height="57" fill="#000060"/><rect x="652" y="140" width="1" height="57" fill="#3333d8"/><rect x="653" y="140" width="1" height="57" fill="#5b5bff"/><rect x="654" y="140" width="1" height="57" fill="#2828d0"/><rect x="651" y="197" width="4" height="5" fill="#5e5e5e"/><rect x="651" y="197" width="5" height="1" fill="#000"/><rect x="651" y="201" width="5" height="1" fill="#000"/><rect x="657" y="203" width="4" height="4" fill="#5e5e5e"/><rect x="657" y="202" width="1" height="6" fill="#000"/><rect x="660" y="202" width="1" height="6" fill="#000"/><rect x="661" y="203" width="72" height="1" fill="#2828d0"/><rect x="661" y="204" width="72" height="1" fill="#5b5bff"/><rect x="661" y="205" width="72" height="1" fill="#2020c0"/><rect x="661" y="206" width="72" height="1" fill="#000060"/><rect x="733" y="203" width="4" height="4" fill="#5e5e5e"/><rect x="733" y="202" width="1" height="6" fill="#000"/><rect x="739" y="208" width="4" height="5" fill="#5e5e5e"/><rect x="738" y="208" width="5" height="1" fill="#000"/><rect x="738" y="212" width="5" height="1" fill="#000"/><rect x="739" y="213" width="1" height="294" fill="#000060"/><rect x="740" y="213" width="1" height="294" fill="#3333d8"/><rect x="741" y="213" width="1" height="294" fill="#5b5bff"/><rect x="742" y="213" width="1" height="294" fill="#2828d0"/><rect x="739" y="507" width="4" height="5" fill="#5e5e5e"/><rect x="738" y="507" width="5" height="1" fill="#000"/><rect x="738" y="511" width="5" height="1" fill="#000"/><rect x="733" y="513" width="5" height="4" fill="#5e5e5e"/><rect x="733" y="512" width="1" height="5" fill="#000"/><rect x="737" y="512" width="1" height="5" fill="#000"/><rect x="196" y="513" width="537" height="1" fill="#2828d0"/><rect x="196" y="514" width="537" height="1" fill="#5b5bff"/><rect x="196" y="515" width="537" height="1" fill="#2020c0"/><rect x="196" y="516" width="537" height="1" fill="#000060"/><rect x="195" y="512" width="1" height="5" fill="#000"/><rect x="673" y="139" width="5" height="1" fill="#000"/><rect x="673" y="140" width="1" height="35" fill="#000060"/><rect x="674" y="140" width="1" height="35" fill="#3333d8"/><rect x="675" y="140" width="1" height="35" fill="#5b5bff"/><rect x="676" y="140" width="1" height="35" fill="#2828d0"/><rect x="673" y="175" width="4" height="5" fill="#5e5e5e"/><rect x="673" y="175" width="5" height="1" fill="#000"/><rect x="673" y="179" width="5" height="1" fill="#000"/><rect x="679" y="181" width="4" height="4" fill="#5e5e5e"/><rect x="679" y="180" width="1" height="6" fill="#000"/><rect x="682" y="180" width="1" height="6" fill="#000"/><rect x="683" y="181" width="72" height="1" fill="#2828d0"/><rect x="683" y="182" width="72" height="1" fill="#5b5bff"/><rect x="683" y="183" width="72" height="1" fill="#2020c0"/><rect x="683" y="184" width="72" height="1" fill="#000060"/><rect x="755" y="181" width="4" height="4" fill="#5e5e5e"/><rect x="755" y="180" width="1" height="6" fill="#000"/><rect x="761" y="186" width="4" height="5" fill="#5e5e5e"/><rect x="760" y="186" width="5" height="1" fill="#000"/><rect x="760" y="190" width="5" height="1" fill="#000"/><rect x="761" y="191" width="1" height="337" fill="#000060"/><rect x="762" y="191" width="1" height="337" fill="#3333d8"/><rect x="763" y="191" width="1" height="337" fill="#5b5bff"/><rect x="764" y="191" width="1" height="337" fill="#2828d0"/><rect x="761" y="528" width="4" height="5" fill="#5e5e5e"/><rect x="760" y="528" width="5" height="1" fill="#000"/><rect x="760" y="532" width="5" height="1" fill="#000"/><rect x="755" y="534" width="5" height="4" fill="#5e5e5e"/><rect x="755" y="533" width="1" height="5" fill="#000"/><rect x="759" y="533" width="1" height="5" fill="#000"/><rect x="196" y="534" width="559" height="1" fill="#2828d0"/><rect x="196" y="535" width="559" height="1" fill="#5b5bff"/><rect x="196" y="536" width="559" height="1" fill="#2020c0"/><rect x="196" y="537" width="559" height="1" fill="#000060"/><rect x="195" y="533" width="1" height="5" fill="#000"/><rect x="695" y="139" width="5" height="1" fill="#000"/><rect x="695" y="140" width="1" height="13" fill="#000060"/><rect x="696" y="140" width="1" height="13" fill="#3333d8"/><rect x="697" y="140" width="1" height="13" fill="#5b5bff"/><rect x="698" y="140" width="1" height="13" fill="#2828d0"/><rect x="695" y="153" width="4" height="5" fill="#5e5e5e"/><rect x="695" y="153" width="5" height="1" fill="#000"/><rect x="695" y="157" width="5" height="1" fill="#000"/><rect x="701" y="159" width="4" height="4" fill="#5e5e5e"/><rect x="701" y="158" width="1" height="6" fill="#000"/><rect x="704" y="158" width="1" height="6" fill="#000"/><rect x="705" y="159" width="71" height="1" fill="#2828d0"/><rect x="705" y="160" width="71" height="1" fill="#5b5bff"/><rect x="705" y="161" width="71" height="1" fill="#2020c0"/><rect x="705" y="162" width="71" height="1" fill="#000060"/><rect x="776" y="159" width="4" height="4" fill="#5e5e5e"/><rect x="776" y="158" width="1" height="6" fill="#000"/><rect x="782" y="164" width="4" height="5" fill="#5e5e5e"/><rect x="781" y="164" width="5" height="1" fill="#000"/><rect x="781" y="168" width="5" height="1" fill="#000"/><rect x="782" y="169" width="1" height="381" fill="#000060"/><rect x="783" y="169" width="1" height="381" fill="#3333d8"/><rect x="784" y="169" width="1" height="381" fill="#5b5bff"/><rect x="785" y="169" width="1" height="381" fill="#2828d0"/><rect x="782" y="550" width="4" height="5" fill="#5e5e5e"/><rect x="781" y="550" width="5" height="1" fill="#000"/><rect x="781" y="554" width="5" height="1" fill="#000"/><rect x="776" y="556" width="5" height="4" fill="#5e5e5e"/><rect x="776" y="555" width="1" height="5" fill="#000"/><rect x="780" y="555" width="1" height="5" fill="#000"/><rect x="196" y="556" width="580" height="1" fill="#2828d0"/><rect x="196" y="557" width="580" height="1" fill="#5b5bff"/><rect x="196" y="558" width="580" height="1" fill="#2020c0"/><rect x="196" y="559" width="580" height="1" fill="#000060"/><rect x="195" y="555" width="1" height="5" fill="#000"/></g><g><path d="M544 310 Q544 314 549 314" fill="none" stroke="#1616a8" stroke-width="4"/><path d="M544 310 Q544 314 549 314" fill="none" stroke="#5050ff" stroke-width="1.6"/><path d="M627 314 Q632 314 632 318" fill="none" stroke="#1616a8" stroke-width="4"/><path d="M627 314 Q632 314 632 318" fill="none" stroke="#5050ff" stroke-width="1.6"/><path d="M632 402 Q632 406 628 406" fill="none" stroke="#1616a8" stroke-width="4"/><path d="M632 402 Q632 406 628 406" fill="none" stroke="#5050ff" stroke-width="1.6"/><path d="M566 288 Q566 292 571 292" fill="none" stroke="#1616a8" stroke-width="4"/><path d="M566 288 Q566 292 571 292" fill="none" stroke="#5050ff" stroke-width="1.6"/><path d="M648 292 Q653 292 653 296" fill="none" stroke="#1616a8" stroke-width="4"/><path d="M648 292 Q653 292 653 296" fill="none" stroke="#5050ff" stroke-width="1.6"/><path d="M653 423 Q653 427 649 427" fill="none" stroke="#1616a8" stroke-width="4"/><path d="M653 423 Q653 427 649 427" fill="none" stroke="#5050ff" stroke-width="1.6"/><path d="M588 266 Q588 270 593 270" fill="none" stroke="#1616a8" stroke-width="4"/><path d="M588 266 Q588 270 593 270" fill="none" stroke="#5050ff" stroke-width="1.6"/><path d="M670 270 Q675 270 675 274" fill="none" stroke="#1616a8" stroke-width="4"/><path d="M670 270 Q675 270 675 274" fill="none" stroke="#5050ff" stroke-width="1.6"/><path d="M675 445 Q675 449 671 449" fill="none" stroke="#1616a8" stroke-width="4"/><path d="M675 445 Q675 449 671 449" fill="none" stroke="#5050ff" stroke-width="1.6"/><path d="M610 245 Q610 249 615 249" fill="none" stroke="#1616a8" stroke-width="4"/><path d="M610 245 Q610 249 615 249" fill="none" stroke="#5050ff" stroke-width="1.6"/><path d="M692 249 Q697 249 697 253" fill="none" stroke="#1616a8" stroke-width="4"/><path d="M692 249 Q697 249 697 253" fill="none" stroke="#5050ff" stroke-width="1.6"/><path d="M697 467 Q697 471 693 471" fill="none" stroke="#1616a8" stroke-width="4"/><path d="M697 467 Q697 471 693 471" fill="none" stroke="#5050ff" stroke-width="1.6"/><path d="M632 223 Q632 227 637 227" fill="none" stroke="#1616a8" stroke-width="4"/><path d="M632 223 Q632 227 637 227" fill="none" stroke="#5050ff" stroke-width="1.6"/><path d="M714 227 Q719 227 719 231" fill="none" stroke="#1616a8" stroke-width="4"/><path d="M714 227 Q719 227 719 231" fill="none" stroke="#5050ff" stroke-width="1.6"/><path d="M719 489 Q719 493 715 493" fill="none" stroke="#1616a8" stroke-width="4"/><path d="M719 489 Q719 493 715 493" fill="none" stroke="#5050ff" stroke-width="1.6"/><path d="M653 201 Q653 205 658 205" fill="none" stroke="#1616a8" stroke-width="4"/><path d="M653 201 Q653 205 658 205" fill="none" stroke="#5050ff" stroke-width="1.6"/><path d="M736 205 Q741 205 741 209" fill="none" stroke="#1616a8" stroke-width="4"/><path d="M736 205 Q741 205 741 209" fill="none" stroke="#5050ff" stroke-width="1.6"/><path d="M741 511 Q741 515 737 515" fill="none" stroke="#1616a8" stroke-width="4"/><path d="M741 511 Q741 515 737 515" fill="none" stroke="#5050ff" stroke-width="1.6"/><path d="M675 179 Q675 183 680 183" fill="none" stroke="#1616a8" stroke-width="4"/><path d="M675 179 Q675 183 680 183" fill="none" stroke="#5050ff" stroke-width="1.6"/><path d="M758 183 Q763 183 763 187" fill="none" stroke="#1616a8" stroke-width="4"/><path d="M758 183 Q763 183 763 187" fill="none" stroke="#5050ff" stroke-width="1.6"/><path d="M763 532 Q763 536 759 536" fill="none" stroke="#1616a8" stroke-width="4"/><path d="M763 532 Q763 536 759 536" fill="none" stroke="#5050ff" stroke-width="1.6"/><path d="M697 157 Q697 161 702 161" fill="none" stroke="#1616a8" stroke-width="4"/><path d="M697 157 Q697 161 702 161" fill="none" stroke="#5050ff" stroke-width="1.6"/><path d="M779 161 Q784 161 784 165" fill="none" stroke="#1616a8" stroke-width="4"/><path d="M779 161 Q784 161 784 165" fill="none" stroke="#5050ff" stroke-width="1.6"/><path d="M784 554 Q784 558 780 558" fill="none" stroke="#1616a8" stroke-width="4"/><path d="M784 554 Q784 558 780 558" fill="none" stroke="#5050ff" stroke-width="1.6"/></g><g shape-rendering="crispEdges"><rect x="542" y="139" width="5" height="1" fill="#000"/><rect x="542" y="306" width="4" height="5" fill="#5e5e5e"/><rect x="542" y="306" width="5" height="1" fill="#000"/><rect x="542" y="310" width="5" height="1" fill="#000"/><rect x="548" y="312" width="4" height="4" fill="#5e5e5e"/><rect x="548" y="311" width="1" height="6" fill="#000"/><rect x="551" y="311" width="1" height="6" fill="#000"/><rect x="624" y="312" width="4" height="4" fill="#5e5e5e"/><rect x="624" y="311" width="1" height="6" fill="#000"/><rect x="630" y="317" width="4" height="5" fill="#5e5e5e"/><rect x="629" y="317" width="5" height="1" fill="#000"/><rect x="629" y="321" width="5" height="1" fill="#000"/><rect x="630" y="398" width="4" height="5" fill="#5e5e5e"/><rect x="629" y="398" width="5" height="1" fill="#000"/><rect x="629" y="402" width="5" height="1" fill="#000"/><rect x="624" y="404" width="5" height="4" fill="#5e5e5e"/><rect x="624" y="403" width="1" height="5" fill="#000"/><rect x="628" y="403" width="1" height="5" fill="#000"/><rect x="195" y="403" width="1" height="5" fill="#000"/><rect x="564" y="139" width="5" height="1" fill="#000"/><rect x="564" y="284" width="4" height="5" fill="#5e5e5e"/><rect x="564" y="284" width="5" height="1" fill="#000"/><rect x="564" y="288" width="5" height="1" fill="#000"/><rect x="570" y="290" width="4" height="4" fill="#5e5e5e"/><rect x="570" y="289" width="1" height="6" fill="#000"/><rect x="573" y="289" width="1" height="6" fill="#000"/><rect x="645" y="290" width="4" height="4" fill="#5e5e5e"/><rect x="645" y="289" width="1" height="6" fill="#000"/><rect x="651" y="295" width="4" height="5" fill="#5e5e5e"/><rect x="650" y="295" width="5" height="1" fill="#000"/><rect x="650" y="299" width="5" height="1" fill="#000"/><rect x="651" y="419" width="4" height="5" fill="#5e5e5e"/><rect x="650" y="419" width="5" height="1" fill="#000"/><rect x="650" y="423" width="5" height="1" fill="#000"/><rect x="645" y="425" width="5" height="4" fill="#5e5e5e"/><rect x="645" y="424" width="1" height="5" fill="#000"/><rect x="649" y="424" width="1" height="5" fill="#000"/><rect x="195" y="424" width="1" height="5" fill="#000"/><rect x="586" y="139" width="5" height="1" fill="#000"/><rect x="586" y="262" width="4" height="5" fill="#5e5e5e"/><rect x="586" y="262" width="5" height="1" fill="#000"/><rect x="586" y="266" width="5" height="1" fill="#000"/><rect x="592" y="268" width="4" height="4" fill="#5e5e5e"/><rect x="592" y="267" width="1" height="6" fill="#000"/><rect x="595" y="267" width="1" height="6" fill="#000"/><rect x="667" y="268" width="4" height="4" fill="#5e5e5e"/><rect x="667" y="267" width="1" height="6" fill="#000"/><rect x="673" y="273" width="4" height="5" fill="#5e5e5e"/><rect x="672" y="273" width="5" height="1" fill="#000"/><rect x="672" y="277" width="5" height="1" fill="#000"/><rect x="673" y="441" width="4" height="5" fill="#5e5e5e"/><rect x="672" y="441" width="5" height="1" fill="#000"/><rect x="672" y="445" width="5" height="1" fill="#000"/><rect x="667" y="447" width="5" height="4" fill="#5e5e5e"/><rect x="667" y="446" width="1" height="5" fill="#000"/><rect x="671" y="446" width="1" height="5" fill="#000"/><rect x="195" y="446" width="1" height="5" fill="#000"/><rect x="608" y="139" width="5" height="1" fill="#000"/><rect x="608" y="241" width="4" height="5" fill="#5e5e5e"/><rect x="608" y="241" width="5" height="1" fill="#000"/><rect x="608" y="245" width="5" height="1" fill="#000"/><rect x="614" y="247" width="4" height="4" fill="#5e5e5e"/><rect x="614" y="246" width="1" height="6" fill="#000"/><rect x="617" y="246" width="1" height="6" fill="#000"/><rect x="689" y="247" width="4" height="4" fill="#5e5e5e"/><rect x="689" y="246" width="1" height="6" fill="#000"/><rect x="695" y="252" width="4" height="5" fill="#5e5e5e"/><rect x="694" y="252" width="5" height="1" fill="#000"/><rect x="694" y="256" width="5" height="1" fill="#000"/><rect x="695" y="463" width="4" height="5" fill="#5e5e5e"/><rect x="694" y="463" width="5" height="1" fill="#000"/><rect x="694" y="467" width="5" height="1" fill="#000"/><rect x="689" y="469" width="5" height="4" fill="#5e5e5e"/><rect x="689" y="468" width="1" height="5" fill="#000"/><rect x="693" y="468" width="1" height="5" fill="#000"/><rect x="195" y="468" width="1" height="5" fill="#000"/><rect x="630" y="139" width="5" height="1" fill="#000"/><rect x="630" y="219" width="4" height="5" fill="#5e5e5e"/><rect x="630" y="219" width="5" height="1" fill="#000"/><rect x="630" y="223" width="5" height="1" fill="#000"/><rect x="636" y="225" width="4" height="4" fill="#5e5e5e"/><rect x="636" y="224" width="1" height="6" fill="#000"/><rect x="639" y="224" width="1" height="6" fill="#000"/><rect x="711" y="225" width="4" height="4" fill="#5e5e5e"/><rect x="711" y="224" width="1" height="6" fill="#000"/><rect x="717" y="230" width="4" height="5" fill="#5e5e5e"/><rect x="716" y="230" width="5" height="1" fill="#000"/><rect x="716" y="234" width="5" height="1" fill="#000"/><rect x="717" y="485" width="4" height="5" fill="#5e5e5e"/><rect x="716" y="485" width="5" height="1" fill="#000"/><rect x="716" y="489" width="5" height="1" fill="#000"/><rect x="711" y="491" width="5" height="4" fill="#5e5e5e"/><rect x="711" y="490" width="1" height="5" fill="#000"/><rect x="715" y="490" width="1" height="5" fill="#000"/><rect x="195" y="490" width="1" height="5" fill="#000"/><rect x="651" y="139" width="5" height="1" fill="#000"/><rect x="651" y="197" width="4" height="5" fill="#5e5e5e"/><rect x="651" y="197" width="5" height="1" fill="#000"/><rect x="651" y="201" width="5" height="1" fill="#000"/><rect x="657" y="203" width="4" height="4" fill="#5e5e5e"/><rect x="657" y="202" width="1" height="6" fill="#000"/><rect x="660" y="202" width="1" height="6" fill="#000"/><rect x="733" y="203" width="4" height="4" fill="#5e5e5e"/><rect x="733" y="202" width="1" height="6" fill="#000"/><rect x="739" y="208" width="4" height="5" fill="#5e5e5e"/><rect x="738" y="208" width="5" height="1" fill="#000"/><rect x="738" y="212" width="5" height="1" fill="#000"/><rect x="739" y="507" width="4" height="5" fill="#5e5e5e"/><rect x="738" y="507" width="5" height="1" fill="#000"/><rect x="738" y="511" width="5" height="1" fill="#000"/><rect x="733" y="513" width="5" height="4" fill="#5e5e5e"/><rect x="733" y="512" width="1" height="5" fill="#000"/><rect x="737" y="512" width="1" height="5" fill="#000"/><rect x="195" y="512" width="1" height="5" fill="#000"/><rect x="673" y="139" width="5" height="1" fill="#000"/><rect x="673" y="175" width="4" height="5" fill="#5e5e5e"/><rect x="673" y="175" width="5" height="1" fill="#000"/><rect x="673" y="179" width="5" height="1" fill="#000"/><rect x="679" y="181" width="4" height="4" fill="#5e5e5e"/><rect x="679" y="180" width="1" height="6" fill="#000"/><rect x="682" y="180" width="1" height="6" fill="#000"/><rect x="755" y="181" width="4" height="4" fill="#5e5e5e"/><rect x="755" y="180" width="1" height="6" fill="#000"/><rect x="761" y="186" width="4" height="5" fill="#5e5e5e"/><rect x="760" y="186" width="5" height="1" fill="#000"/><rect x="760" y="190" width="5" height="1" fill="#000"/><rect x="761" y="528" width="4" height="5" fill="#5e5e5e"/><rect x="760" y="528" width="5" height="1" fill="#000"/><rect x="760" y="532" width="5" height="1" fill="#000"/><rect x="755" y="534" width="5" height="4" fill="#5e5e5e"/><rect x="755" y="533" width="1" height="5" fill="#000"/><rect x="759" y="533" width="1" height="5" fill="#000"/><rect x="195" y="533" width="1" height="5" fill="#000"/><rect x="695" y="139" width="5" height="1" fill="#000"/><rect x="695" y="153" width="4" height="5" fill="#5e5e5e"/><rect x="695" y="153" width="5" height="1" fill="#000"/><rect x="695" y="157" width="5" height="1" fill="#000"/><rect x="701" y="159" width="4" height="4" fill="#5e5e5e"/><rect x="701" y="158" width="1" height="6" fill="#000"/><rect x="704" y="158" width="1" height="6" fill="#000"/><rect x="776" y="159" width="4" height="4" fill="#5e5e5e"/><rect x="776" y="158" width="1" height="6" fill="#000"/><rect x="782" y="164" width="4" height="5" fill="#5e5e5e"/><rect x="781" y="164" width="5" height="1" fill="#000"/><rect x="781" y="168" width="5" height="1" fill="#000"/><rect x="782" y="550" width="4" height="5" fill="#5e5e5e"/><rect x="781" y="550" width="5" height="1" fill="#000"/><rect x="781" y="554" width="5" height="1" fill="#000"/><rect x="776" y="556" width="5" height="4" fill="#5e5e5e"/><rect x="776" y="555" width="1" height="5" fill="#000"/><rect x="780" y="555" width="1" height="5" fill="#000"/><rect x="195" y="555" width="1" height="5" fill="#000"/></g><g fill="none" stroke="#000" stroke-width="1.2"><circle cx="490.3" cy="349.5" r="7.6" stroke-dasharray="2.4 1"/><path d="M482 349.5 H498 M490.5 341.5 V357.5"/></g><polygon points="1,604 8.5,624.5 44.5,624.5 47,614.5 51.5,604" fill="#fbfbfb"/>
<g fill="none" stroke="#000" stroke-width="1.1">
<path d="M1.5 604.5 L8.5 624.5 H44.5 L47.5 615"/>
<path d="M83.5 604.5 L77 624.5 H51.5 L47 614.5 L51.5 604.5 H947"/>
</g>
<g>
<rect x="57.5" y="609.5" width="13" height="9" fill="#008000" stroke="#000" stroke-width="1"/>
<path d="M56.5 608 L64 615.5 M64 608 L56.5 615.5" stroke="#ffff00" stroke-width="1"/>
<path d="M56 611.8 H64.5 M60.3 607.5 V616" stroke="#fff" stroke-width="1"/>
<rect x="58.6" y="610" width="3.4" height="3.4" fill="#ffff30"/><rect x="59.4" y="610.8" width="1.8" height="1.8" fill="#fff"/>
</g><text x="9.3" y="618.6" font-family="Liberation Sans" font-weight="bold" font-size="11.3" letter-spacing="-0.1" fill="#000">Global</text><g clip-path="url(#rowclip)"><rect x="9.6" y="660.6" width="14" height="8" fill="#a87400" stroke="#000" stroke-width="1.3"/><rect x="10.5" y="664" width="11" height="1" fill="#3a3a00"/><rect x="21" y="665" width="1" height="2" fill="#000"/></g><g clip-path="url(#rowclip)"><path d="M9.5 675.5 H15 V679.5 L17 681.5 L23 683.5 V689.5 L18 688.5 L13 685.5 L10.5 681.5 Z" fill="#a3003a" stroke="#000" stroke-width="1"/><path d="M10 681.5 L12.5 685.5 L17.5 689.0" stroke="#e8b800" stroke-width="1.2" fill="none"/><rect x="9" y="675.5" width="6.5" height="1.6" fill="#000"/><rect x="20" y="683.5" width="3.5" height="6.5" fill="#000"/><path d="M14.5 681.5 L17.5 685.0" stroke="#000" stroke-width="1.6"/><circle cx="12" cy="678.5" r="0.6" fill="#e8b800"/><circle cx="13.5" cy="680.5" r="0.6" fill="#e8b800"/></g><g clip-path="url(#rowclip)"><rect x="9.6" y="698.6" width="14" height="8" fill="#a87400" stroke="#000" stroke-width="1.3"/><rect x="10.5" y="702" width="11" height="1" fill="#3a3a00"/><rect x="21" y="703" width="1" height="2" fill="#000"/></g><g clip-path="url(#rowclip)"><rect x="9.6" y="717.6" width="14" height="8" fill="#a87400" stroke="#000" stroke-width="1.3"/><rect x="10.5" y="721" width="11" height="1" fill="#3a3a00"/><rect x="21" y="722" width="1" height="2" fill="#000"/></g><g clip-path="url(#rowclip)"><path d="M9.5 732.5 H15 V736.5 L17 738.5 L23 740.5 V746.5 L18 745.5 L13 742.5 L10.5 738.5 Z" fill="#a3003a" stroke="#000" stroke-width="1"/><path d="M10 738.5 L12.5 742.5 L17.5 746.0" stroke="#e8b800" stroke-width="1.2" fill="none"/><rect x="9" y="732.5" width="6.5" height="1.6" fill="#000"/><rect x="20" y="740.5" width="3.5" height="6.5" fill="#000"/><path d="M14.5 738.5 L17.5 742.0" stroke="#000" stroke-width="1.6"/><circle cx="12" cy="735.5" r="0.6" fill="#e8b800"/><circle cx="13.5" cy="737.5" r="0.6" fill="#e8b800"/></g><g clip-path="url(#rowclip)"><rect x="9.6" y="755.6" width="14" height="8" fill="#a87400" stroke="#000" stroke-width="1.3"/><rect x="10.5" y="759" width="11" height="1" fill="#3a3a00"/><rect x="21" y="760" width="1" height="2" fill="#000"/></g><g clip-path="url(#rowclip)"><path d="M9.5 770.5 H15 V774.5 L17 776.5 L23 778.5 V784.5 L18 783.5 L13 780.5 L10.5 776.5 Z" fill="#a3003a" stroke="#000" stroke-width="1"/><path d="M10 776.5 L12.5 780.5 L17.5 784.0" stroke="#e8b800" stroke-width="1.2" fill="none"/><rect x="9" y="770.5" width="6.5" height="1.6" fill="#000"/><rect x="20" y="778.5" width="3.5" height="6.5" fill="#000"/><path d="M14.5 776.5 L17.5 780.0" stroke="#000" stroke-width="1.6"/><circle cx="12" cy="773.5" r="0.6" fill="#e8b800"/><circle cx="13.5" cy="775.5" r="0.6" fill="#e8b800"/></g><path d="M932.2 642.5 L935.5 638.2 L938.8 642.5" stroke="#606060" stroke-width="1.8" fill="none"/><path d="M932.2 765.5 L935.5 769.8 L938.8 765.5" stroke="#606060" stroke-width="1.8" fill="none"/><path d="M14.5 781.2 L10 784.5 L14.5 787.8" stroke="#606060" stroke-width="1.8" fill="none"/><path d="M916.5 781.2 L921 784.5 L916.5 787.8" stroke="#606060" stroke-width="1.8" fill="none"/><path d="M935 843.5 L946.5 832 M939 843.5 L946.5 836 M943 843.5 L946.5 840" stroke="#8c8c8c" stroke-width="1.1"/><path d="M934 843.5 L946.5 831 M938 843.5 L946.5 835 M942 843.5 L946.5 839" stroke="#fff" stroke-width="0.8"/><path d="M720.5 29.5 L720.5 45.5 L724.3 42 L727.5 47.5 L729.8 46.3 L727.3 41.3 L731.8 41.3 Z" fill="#fff" stroke="#000" stroke-width="1" stroke-linejoin="round"/></svg>
</body></html>
